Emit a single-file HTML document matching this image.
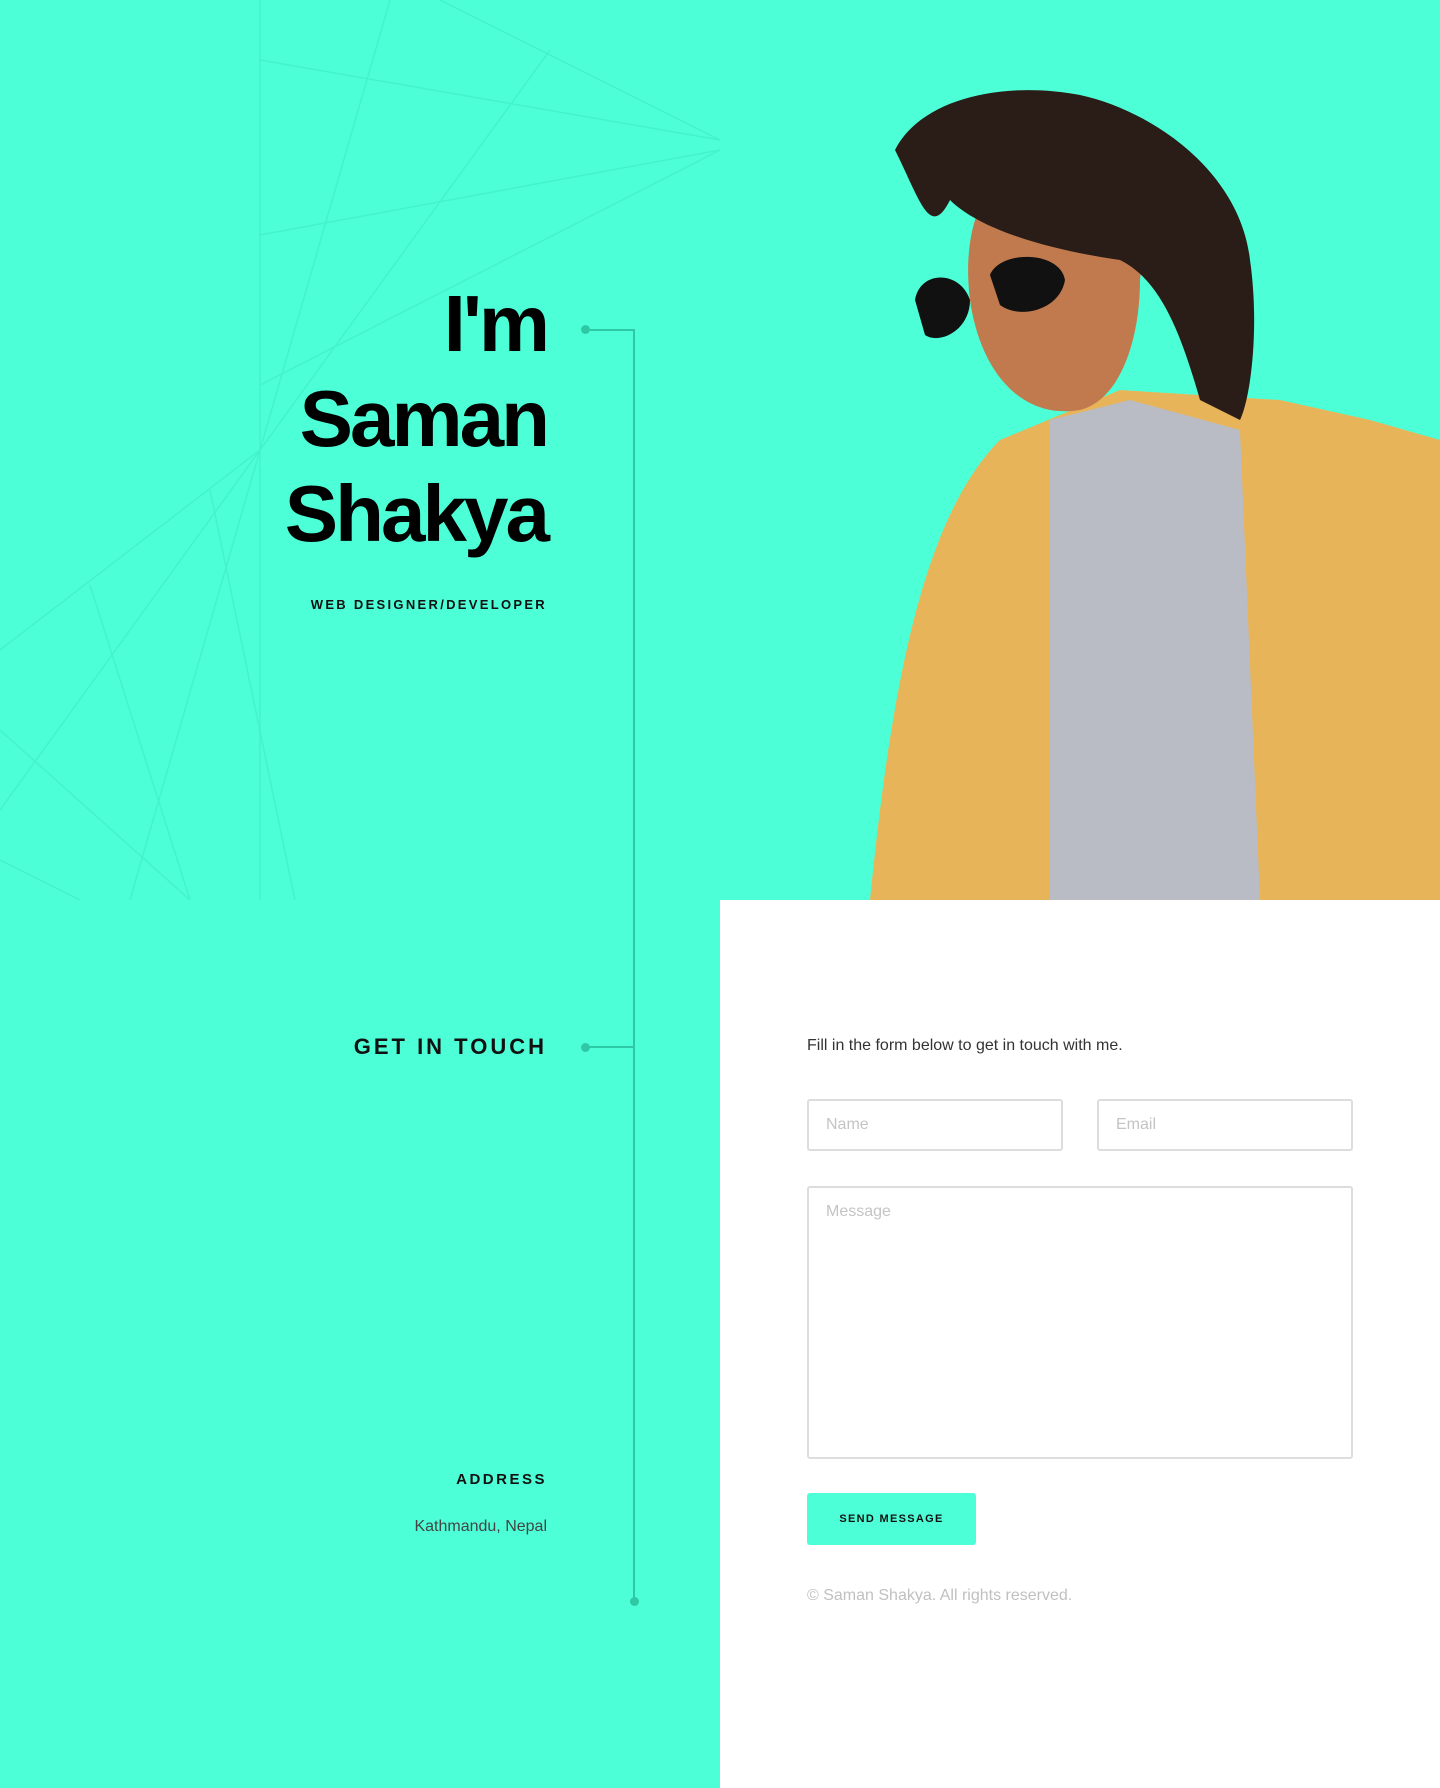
<!DOCTYPE html>
<html><head><meta charset="utf-8"><style>
*{margin:0;padding:0;box-sizing:border-box}
body{width:1440px;height:1788px;position:relative;background:#4cffd7;font-family:"Liberation Sans",sans-serif;overflow:hidden}
.abs{position:absolute}
h1{position:absolute;right:893px;top:276px;font-size:80px;line-height:95px;font-weight:bold;letter-spacing:-3px;text-align:right;color:#000}
.sub{right:893px;top:597px;font-size:13px;letter-spacing:2.3px;font-weight:bold;color:#111}
.git{right:893px;top:1034px;font-size:22px;letter-spacing:3px;font-weight:bold;color:#111}
.addr{right:893px;top:1471px;font-size:15px;letter-spacing:2.5px;font-weight:bold;color:#111}
.city{right:893px;top:1518px;font-size:16px;color:#444}
.white{left:720px;top:900px;width:720px;height:888px;background:#fff}
.field{border:2px solid #ddd;border-radius:3px;background:#fff;color:#c4c4c4;font-size:16px;padding:15px 17px}
</style></head><body>
<svg class="abs" style="left:0;top:0" width="720" height="900">
<g stroke="#44f3cb" stroke-width="1.5" fill="none">
<line x1="260" y1="0" x2="260" y2="900"/>
<line x1="260" y1="60" x2="720" y2="140"/>
<line x1="260" y1="235" x2="720" y2="150"/>
<line x1="390" y1="0" x2="260" y2="450"/>
<line x1="550" y1="50" x2="260" y2="450"/>
<line x1="720" y1="150" x2="260" y2="385"/>
<line x1="260" y1="450" x2="0" y2="650"/>
<line x1="260" y1="450" x2="0" y2="810"/>
<line x1="210" y1="490" x2="295" y2="900"/>
<line x1="260" y1="450" x2="130" y2="900"/>
<line x1="90" y1="585" x2="190" y2="900"/>
<line x1="0" y1="730" x2="190" y2="900"/>
<line x1="0" y1="860" x2="80" y2="900"/>
<line x1="440" y1="0" x2="720" y2="140"/>
</g></svg>
<svg class="abs" style="left:720px;top:0" width="720" height="900">
<path d="M150 900 C170 700 200 520 280 440 L400 390 L560 400 L650 420 L720 440 L720 900Z" fill="#e8b45a"/>
<path d="M330 420 L410 400 L520 430 L540 900 L330 900 Z" fill="#b9bcc4"/>
<path d="M250 300 C240 220 270 160 330 150 C400 140 430 200 420 280 C420 340 400 400 360 410 C300 420 260 370 250 300Z" fill="#c07a4e"/>
<path d="M175 150 C200 100 280 80 360 95 C430 110 520 170 530 260 C540 330 530 400 520 420 L480 400 C460 330 440 280 400 260 C330 250 260 230 230 200 C210 240 200 200 175 150Z" fill="#2a1c16"/>
<path d="M195 300 C200 270 240 270 250 300 C250 330 220 345 205 335Z M270 275 C280 250 340 250 345 280 C340 310 300 320 280 305Z" fill="#111"/>
</svg>
<div class="abs white"></div>
<h1>I'm<br>Saman<br>Shakya</h1>
<div class="abs sub">WEB DESIGNER/DEVELOPER</div>
<div class="abs git">GET IN TOUCH</div>
<div class="abs addr">ADDRESS</div>
<div class="abs city">Kathmandu, Nepal</div>
<div class="abs" style="left:633px;top:330px;width:2px;height:1272px;background:#2ec9a4"></div>
<div class="abs" style="left:585px;top:329px;width:50px;height:2px;background:#2ec9a4"></div>
<div class="abs" style="left:585px;top:1046px;width:50px;height:2px;background:#2ec9a4"></div>
<div class="abs" style="left:581px;top:325px;width:9px;height:9px;border-radius:50%;background:#2ec9a4"></div>
<div class="abs" style="left:581px;top:1043px;width:9px;height:9px;border-radius:50%;background:#2ec9a4"></div>
<div class="abs" style="left:630px;top:1597px;width:9px;height:9px;border-radius:50%;background:#2ec9a4"></div>
<div class="abs" style="left:807px;top:1037px;font-size:16px;color:#333">Fill in the form below to get in touch with me.</div>
<div class="abs field" style="left:807px;top:1099px;width:256px;height:52px">Name</div>
<div class="abs field" style="left:1097px;top:1099px;width:256px;height:52px">Email</div>
<div class="abs field" style="left:807px;top:1186px;width:546px;height:273px">Message</div>
<div class="abs" style="left:807px;top:1493px;width:169px;height:52px;background:#4cffd7;border-radius:3px;font-size:11px;font-weight:bold;letter-spacing:1.3px;text-align:center;line-height:52px;color:#111">SEND MESSAGE</div>
<div class="abs" style="left:807px;top:1587px;font-size:16px;color:#c0c0c0">© Saman Shakya. All rights reserved.</div>
</body></html>
